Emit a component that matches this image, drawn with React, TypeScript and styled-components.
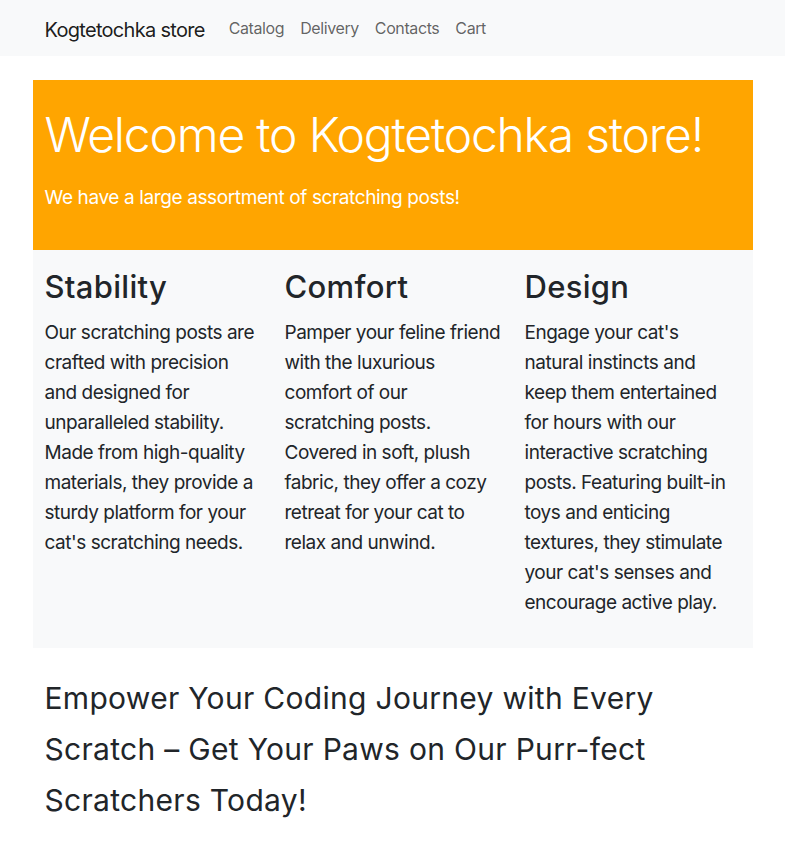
import React from "react";
import styled, { createGlobalStyle } from "styled-components";

const GlobalStyle = createGlobalStyle`
  *, *::before, *::after { box-sizing: border-box; }
  body {
    margin: 0;
    font-family: Inter, "Noto Sans", "Liberation Sans", sans-serif;
    font-size: 16px;
    line-height: 1.5;
    color: #212529;
    background: #fff;
  }
`;

const Navbar = styled.nav`
  background: #f8f9fa;
  height: 56px;
  display: flex;
  align-items: center;
`;

const Container = styled.div`
  width: 720px;
  margin: 0 auto;
  padding: 0 12px;
  display: flex;
  align-items: center;
`;

const Brand = styled.a`
  font-size: 20px;
  letter-spacing: -0.035em;
  color: rgba(0, 0, 0, 0.9);
  text-decoration: none;
  margin: 3px 16px 0 0;
  line-height: 30px;
`;

const NavList = styled.ul`
  display: flex;
  list-style: none;
  margin: 0;
  padding: 0;
`;

const NavLink = styled.a`
  display: block;
  padding: 8px;
  font-size: 16px;
  letter-spacing: -0.025em;
  color: rgba(0, 0, 0, 0.62);
  text-decoration: none;
`;

const Main = styled.main`
  width: 720px;
  margin: 24px auto 0;
`;

const Hero = styled.section`
  background: #ffa500;
  color: #fff;
  padding: 26px 12px 38px;
`;

const HeroTitle = styled.h1`
  margin: 0 0 20px;
  font-size: 48px;
  font-weight: 300;
  letter-spacing: -0.025em;
  line-height: 57.6px;
`;

const Lead = styled.p`
  margin: 0;
  font-size: 19px;
  font-weight: 400;
  letter-spacing: -0.02em;
  line-height: 28.5px;
`;

const Features = styled.section`
  background: #f8f9fa;
  display: grid;
  grid-template-columns: repeat(3, 1fr);
  padding: 18px 0 30px;
`;

const Feature = styled.div`
  padding: 0 12px;
`;

const FeatureTitle = styled.h2`
  margin: 0 0 12.5px;
  font-size: 31px;
  font-weight: 500;
  letter-spacing: 0.01em;
  line-height: 37.2px;
`;

const FeatureText = styled.p`
  margin: 0;
  font-size: 19px;
  letter-spacing: -0.025em;
  line-height: 30px;
`;

const TextLine = styled.span`
  display: block;
  white-space: nowrap;
`;

const Slogan = styled.h2`
  margin: 25px 0 0;
  padding: 0 12px;
  font-size: 30px;
  font-weight: 400;
  letter-spacing: 0.01em;
  line-height: 51px;
`;

const features = [
  {
    title: "Stability",
    lines: [
      "Our scratching posts are",
      "crafted with precision",
      "and designed for",
      "unparalleled stability.",
      "Made from high-quality",
      "materials, they provide a",
      "sturdy platform for your",
      "cat's scratching needs.",
    ],
  },
  {
    title: "Comfort",
    lines: [
      "Pamper your feline friend",
      "with the luxurious",
      "comfort of our",
      "scratching posts.",
      "Covered in soft, plush",
      "fabric, they offer a cozy",
      "retreat for your cat to",
      "relax and unwind.",
    ],
  },
  {
    title: "Design",
    lines: [
      "Engage your cat's",
      "natural instincts and",
      "keep them entertained",
      "for hours with our",
      "interactive scratching",
      "posts. Featuring built-in",
      "toys and enticing",
      "textures, they stimulate",
      "your cat's senses and",
      "encourage active play.",
    ],
  },
];

export default function App() {
  return (
    <>
      <GlobalStyle />
      <Navbar>
        <Container>
          <Brand href="#">Kogtetochka store</Brand>
          <NavList>
            {["Catalog", "Delivery", "Contacts", "Cart"].map((l) => (
              <li key={l}>
                <NavLink href="#">{l}</NavLink>
              </li>
            ))}
          </NavList>
        </Container>
      </Navbar>
      <Main>
        <Hero>
          <HeroTitle>Welcome to Kogtetochka store!</HeroTitle>
          <Lead>We have a large assortment of scratching posts!</Lead>
        </Hero>
        <Features>
          {features.map((f) => (
            <Feature key={f.title}>
              <FeatureTitle>{f.title}</FeatureTitle>
              <FeatureText>
                {f.lines.map((line) => (
                  <TextLine key={line}>{line} </TextLine>
                ))}
              </FeatureText>
            </Feature>
          ))}
        </Features>
        <Slogan>
          Empower Your Coding Journey with Every Scratch – Get Your Paws on Our Purr-fect Scratchers Today!
        </Slogan>
      </Main>
    </>
  );
}
